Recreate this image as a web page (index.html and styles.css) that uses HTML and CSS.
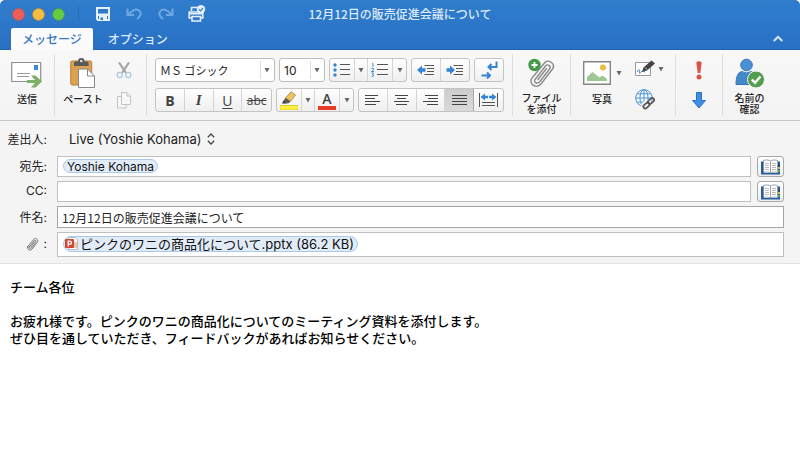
FILE: index.html
```html
<!DOCTYPE html>
<html lang="ja">
<head>
<meta charset="utf-8">
<meta name="viewport" content="width=device-width, initial-scale=1">
<title>12月12日の販売促進会議について</title>
<link rel="stylesheet" href="styles.css">
</head>
<body>
<svg class="defs" aria-hidden="true">
  <symbol id="caret" viewBox="0 0 6 6"><path d="M.5 1h5L3 5.500z" fill="#666"/></symbol>
  <symbol id="clip" viewBox="0 0 28 30"><g fill="none" stroke-linecap="round"><path d="M4 20 16.500 5c3.500-4.500 11.500.5 8 6L13 26c-5 5.500-13-.5-9-6z"/><path d="M7 21.500 17.500 8c2-2.500 6 0 4 3L12 23.500c-2.500 3-7 1-5-2z"/><path d="m10 21.500 8.500-11"/></g></symbol>
  <symbol id="book" viewBox="0 0 20 16"><path d="M0 2.500h3V14h14V2.500h2v13H0z" fill="#245c9e"/><path d="M17 5h2v3h-2z" fill="#274b70"/><path d="M17 8h2v2h-2z" fill="#e0b83c"/><path d="M17 11h2v2h-2z" fill="#5fa65b"/><path d="M2.500 1.500c3-1 5.500-.5 7 .5 1.500-1 4-1.500 7-.5v12c-3-.8-5.500-.5-7 .5-1.500-1-4-1.300-7-.5z" fill="#fff" stroke="#7d8b98" stroke-width=".8"/><path d="M9.500 2v12" stroke="#9ba4ad"/><path d="M4 4.500h4M4 6.500h4M4 8.500h4M4 10.500h4M11 4.500h4M11 6.500h4M11 8.500h4M11 10.500h4" stroke="#aaa" stroke-width=".8"/></symbol>
</svg>

<div class="window">
  <header class="chrome">
    <div class="titlebar">
      <div class="quick">
        <div class="lights">
          <button class="light close" aria-label="閉じる"></button>
          <button class="light mini" aria-label="最小化"></button>
          <button class="light zoom" aria-label="拡大"></button>
        </div>
        <button class="tool save" aria-label="保存"><svg width="14" height="14" viewBox="0 0 14 14"><path d="M1 1h12v12H2L1 12z" fill="none" stroke="#e5f0fb" stroke-width="2"/><path d="M1 6.500h12V9H1zM3 9h8v4.500H3z" fill="#e5f0fb"/><path d="M4.500 10.500H7v2.500H4.500z" fill="#2f79c9"/></svg></button>
        <button class="tool undo" aria-label="元に戻す"><svg width="16" height="12" viewBox="0 0 16 12" fill="none" stroke="#6ea8e0" stroke-width="2"><path d="M1.500.5v6.500H8M2 6.500 6.500 3C9 1 12 1 13.500 3s1.300 4.500-.5 6L11 11"/></svg></button>
        <button class="tool redo" aria-label="やり直し"><svg width="16" height="12" viewBox="0 0 16 12" fill="none" stroke="#6ea8e0" stroke-width="2"><path d="M14.500.5v6.500H8M14 6.500 9.500 3C7 1 4 1 2.500 3S1.200 7.500 3 9l2 2"/></svg></button>
        <button class="tool print" aria-label="印刷"><svg width="18" height="18" viewBox="0 0 18 18"><path d="M3.500 6V2.500h6M3.500 13H1.200V7h13.600v6h-2.300M4 11.500h8.500V16H4z" fill="none" stroke="#e5f0fb" stroke-width="1.600"/><path d="M1 8h14v1.500H1z" fill="#e5f0fb"/><circle cx="13" cy="4.200" r="4.200" fill="#e5f0fb"/><path d="m11 4.200 1.500 1.600 2.700-3" fill="none" stroke="#2f79c9" stroke-width="1.200"/></svg></button>
      </div>
      <h1>12月12日の販売促進会議について</h1>
    </div>
    <nav class="tabs">
      <button class="tab active">メッセージ</button>
      <button class="tab">オプション</button>
      <button class="collapse" aria-label="リボンを折りたたむ"><svg width="10" height="7" viewBox="0 0 10 7" fill="none" stroke="#d9e8f8" stroke-width="2"><path d="M.8 6 5 1.800 9.200 6"/></svg></button>
    </nav>
  </header>

  <div class="ribbon">
    <div class="group send">
      <button class="big"><svg width="32" height="30" viewBox="0 0 32 30"><path d="M.7 4.500h29v19h-29z" fill="#fff" stroke="#8e8e8e" stroke-width="1.200"/><path d="M23 7h4v5h-4z" fill="#3d8ad4"/><path d="M6 15.500h13M6 18.500h12" stroke="#999"/><path d="M16 22h8l-4-4.500h4.500l6.500 6-6.500 6H20l4-4.500h-8z" fill="#7fae68"/></svg><span>送信</span></button>
    </div>
    <div class="group paste">
      <button class="big"><svg width="26" height="30" viewBox="0 0 26 30"><rect x=".7" y="3" width="21" height="24" rx="1.500" fill="#dda251" stroke="#b9803a"/><path d="M4 8V5q0-1.500 2-1.500h2C8 1 9 0 11.300 0s3.300 1 3.300 3.500h2q2 0 2 1.500v3z" fill="#5a5a5a"/><circle cx="11.300" cy="3" r="1.300" fill="#ddd"/><path d="M8.500 11h9l7 7v11.500h-16z" fill="#fff" stroke="#888"/><path d="M17.500 11v7h7" fill="none" stroke="#888"/></svg><span>ペースト</span></button>
      <div class="stack">
        <button aria-label="切り取り"><svg width="16" height="17" viewBox="0 0 16 17" fill="none"><path d="M3 .5 10 11M13 .5 6 11" stroke="#a5a5a5" stroke-width="2.200"/><circle cx="3.700" cy="13" r="2.600" stroke="#a9cae4" stroke-width="1.300"/><circle cx="12.300" cy="13" r="2.600" stroke="#a9cae4" stroke-width="1.300"/></svg></button>
        <button aria-label="コピー"><svg width="14" height="17" viewBox="0 0 14 17" fill="#f7f7f7" stroke="#c4c4c4"><path d="M.5 4.500h6l2.500 2.500v9H.5z"/><path d="M4.500.5h5.500l3.500 3.500v8.500h-9z"/><path d="M10 .5V4h3.500"/></svg></button>
      </div>
    </div>
    <div class="group format">
      <div class="row">
        <div class="pick font"><select aria-label="フォント"><option>ＭＳ ゴシック</option></select><svg class="caret" width="6" height="6"><use href="#caret"/></svg></div>
        <div class="pick size"><select aria-label="フォント サイズ"><option>10</option></select><svg class="caret" width="6" height="6"><use href="#caret"/></svg></div>
        <div class="bar split">
          <button aria-label="箇条書き"><svg width="18" height="14" viewBox="0 0 18 14"><g fill="#3583d3"><circle cx="2" cy="2" r="1.700"/><circle cx="2" cy="7" r="1.700"/><circle cx="2" cy="12" r="1.700"/></g><path d="M7 1.500h10M7 6.500h10M7 11.500h10" stroke="#555"/></svg></button>
          <button class="drop" aria-label="箇条書きの種類"><svg width="6" height="6"><use href="#caret"/></svg></button>
          <button aria-label="段落番号"><svg width="18" height="14" viewBox="0 0 18 14"><path d="M1 1l1-.5V4M.5 5.500h2v1.300l-2 1.700h2.500M.5 10h2L1.500 11.500q1.500 0 1 1.500l-2 .5" fill="none" stroke="#3583d3" stroke-width=".9"/><path d="M6 1.500h11M6 6.500h11M6 11.500h11" stroke="#555"/></svg></button>
          <button class="drop" aria-label="段落番号の種類"><svg width="6" height="6"><use href="#caret"/></svg></button>
        </div>
        <div class="bar two">
          <button aria-label="インデントを減らす"><svg width="18" height="12" viewBox="0 0 18 12"><path d="M0 6 5 1.500v2.700h3.500v3.600H5v2.700z" fill="#3583d3"/><path d="M7.500 1.500H17M10 4.500h7M10 7.500h7M7.500 10.500H17" stroke="#555"/></svg></button>
          <button aria-label="インデントを増やす"><svg width="18" height="12" viewBox="0 0 18 12"><path d="M9 6 4 1.500v2.700H.5v3.600H4v2.700z" fill="#3583d3"/><path d="M7.500 1.500H17M10 4.500h7M10 7.500h7M7.500 10.500H17" stroke="#555"/></svg></button>
        </div>
        <div class="bar one">
          <button aria-label="文字の方向"><svg width="17" height="18" viewBox="0 0 17 18" fill="none" stroke="#3583d3" stroke-width="2"><path d="M15.500.5v5.500H8M10.500 3 7.500 6l3 3M.5 14.500h8M6 11.500l3 3-3 3"/></svg></button>
        </div>
      </div>
      <div class="row">
        <div class="bar four">
          <button class="b">B</button><button class="i">I</button><button class="u">U</button><button class="s">abc</button>
        </div>
        <div class="bar split">
          <button aria-label="蛍光ペン"><svg width="18" height="19" viewBox="0 0 18 19"><path d="M0 14.500h18V19H0z" fill="#fff13c" stroke="#d9cf33"/><path d="M5.500 7 11 .8 15.500 4l-5 6.500z" fill="#efc261" stroke="#a8843d" stroke-width=".8"/><path d="m5.500 7 5 3.500-2.500 2-4.500-2.800z" fill="#555"/><path d="m3.500 9.500 4 3H2z" fill="#333"/></svg></button>
          <button class="drop" aria-label="蛍光ペンの色"><svg width="6" height="6"><use href="#caret"/></svg></button>
          <button class="color" aria-label="フォントの色"><span>A</span></button>
          <button class="drop" aria-label="フォントの色の選択"><svg width="6" height="6"><use href="#caret"/></svg></button>
        </div>
        <div class="bar five">
          <button aria-label="左揃え"><svg width="15" height="11" viewBox="0 0 15 11" stroke="#444"><path d="M0 .5h13M0 3.500h10M0 6.500h15M0 9.500h11"/></svg></button>
          <button aria-label="中央揃え"><svg width="15" height="11" viewBox="0 0 15 11" stroke="#444"><path d="M1 .5h13M3 3.500h9M0 6.500h15M2 9.500h11"/></svg></button>
          <button aria-label="右揃え"><svg width="15" height="11" viewBox="0 0 15 11" stroke="#444"><path d="M2 .5h13M5 3.500h10M0 6.500h15M4 9.500h11"/></svg></button>
          <button class="on" aria-label="両端揃え"><svg width="15" height="11" viewBox="0 0 15 11" stroke="#444"><path d="M0 .5h15M0 3.500h15M0 6.500h15M0 9.500h15"/></svg></button>
          <button aria-label="段落の幅"><svg width="19" height="14" viewBox="0 0 19 14"><path d="M.5 0v14M18.500 0v14M3 9.500h13M3 12.500h13" stroke="#555"/><path d="m1.500 4 4.500-3.500v2.300h7V.5L17.500 4 13 7.500V5.200H6v2.300z" fill="#3583d3"/><path d="M9 2h1v4H9z" fill="#f5f5f5"/></svg></button>
        </div>
      </div>
    </div>
    <div class="group attach">
      <button class="big"><svg width="28" height="30" viewBox="0 0 28 30"><use href="#clip" stroke="#8b8b8b" stroke-width="1.400"/><circle cx="6.500" cy="7" r="6.200" fill="#459a49"/><path d="M6.500 4v6M3.500 7h6" stroke="#fff" stroke-width="1.800"/></svg><span>ファイル<br>を添付</span></button>
    </div>
    <div class="group insert">
      <button class="big"><i class="pair"><svg width="28" height="30" viewBox="0 0 28 30"><path d="M.7 3.700h26.600v22.600H.7z" fill="#fff" stroke="#858585" stroke-width="1.400"/><path d="M4 23v-4l5.500-5 7 5.500 3-2 4.500 3.500v2z" fill="#9cc795"/><circle cx="20" cy="9.500" r="3" fill="#efb83f"/></svg><svg width="6" height="6"><use href="#caret"/></svg></i><span>写真</span></button>
      <div class="stack">
        <button class="sign" aria-label="署名"><svg width="20" height="17" viewBox="0 0 20 17"><path d="M.5 2.500h15v13H.5z" fill="#fff" stroke="#999"/><path d="M2 12c2-3 3-3 2.500 0s1.500 0 2.500-1 1 1 3 1" fill="none" stroke="#3d87cf"/><path d="M7 12 8.500 7.500 16.500.5 20 3.500l-8 7z" fill="#444"/><path d="m10 7.500 2 2" stroke="#ccc"/></svg><svg width="6" height="6"><use href="#caret"/></svg></button>
        <button aria-label="リンク"><svg width="21" height="21" viewBox="0 0 21 21" fill="none"><g stroke="#4b92d5"><circle cx="9" cy="9" r="8.300" fill="#fafcff"/><ellipse cx="9" cy="9" rx="4" ry="8.300"/><path d="M9 .7v16.600M.7 9h16.600M2 4.800h14M2 13.200h14"/></g><g stroke="#f5f5f5" stroke-width="4.500"><rect x="8" y="14" width="7" height="4" rx="2" transform="rotate(-42 11.500 16)"/></g><g stroke="#555" stroke-width="1.700"><rect x="8" y="14.500" width="7" height="4" rx="2" transform="rotate(-42 11.500 16.500)"/><rect x="12.500" y="10" width="7" height="4" rx="2" transform="rotate(-42 16 12)"/></g></svg></button>
      </div>
    </div>
    <div class="group prio">
      <button aria-label="重要度 - 高"><svg width="6" height="19" viewBox="0 0 6 19" fill="#dd5245"><path d="M.3 1.500q2.700-2.500 5.400 0L4.300 12H1.700z"/><circle cx="3" cy="16" r="2.500"/></svg></button>
      <button aria-label="重要度 - 低"><svg width="14" height="17" viewBox="0 0 14 17"><path d="M4.500.5h5v8h4L7 16 .5 8.500h4z" fill="#3d8ee6" stroke="#2c72c2"/></svg></button>
    </div>
    <div class="group names">
      <button class="big"><svg width="30" height="30" viewBox="0 0 30 30"><circle cx="11.500" cy="7" r="5.800" fill="#4b90d2" stroke="#3577b8"/><path d="M1 26.500c0-8 2-12 5.500-13q5 3 10 0c3 1 5 5 5 13z" fill="#4388cb" stroke="#3577b8"/><circle cx="21" cy="21.500" r="8.500" fill="#559e51" stroke="#f5f5f5"/><path d="m16.800 21.500 3.200 3.200 5.500-6.200" fill="none" stroke="#fff" stroke-width="2.400"/></svg><span>名前の<br>確認</span></button>
    </div>
  </div>

  <form class="fields">
    <label for="from">差出人:</label>
    <div class="from"><select id="from"><option>Live (Yoshie Kohama)</option></select><svg width="8" height="12" viewBox="0 0 8 12" fill="none" stroke="#444" stroke-width="1.300"><path d="M.8 4.200 4 1l3.200 3.200M.8 7.800 4 11l3.200-3.200"/></svg></div>

    <label for="to">宛先:</label>
    <div class="line"><div class="box"><span class="token">Yoshie Kohama</span><input id="to" type="text"></div><button type="button" class="address" aria-label="宛先のアドレス帳"><svg width="20" height="16"><use href="#book"/></svg></button></div>

    <label for="cc">CC:</label>
    <div class="line"><div class="box"><input id="cc" type="text"></div><button type="button" class="address" aria-label="CCのアドレス帳"><svg width="20" height="16"><use href="#book"/></svg></button></div>

    <label for="subject">件名:</label>
    <div class="box subject"><input id="subject" type="text" value="12月12日の販売促進会議について"></div>

    <span class="label"><svg width="13" height="14"><use href="#clip" stroke="#666" stroke-width="1.800"/></svg><span>:</span></span>
    <div class="box files"><span class="token file"><svg width="13" height="13" viewBox="0 0 13 13"><path d="M3.500.5H10l2.500 2.500v9.500h-9z" fill="#fff" stroke="#bbb"/><path d="M8 5h4v6H8z" fill="#e9c9ae"/><rect y="2" width="9" height="9" rx="1" fill="#cf4634"/><path d="M3.200 9.500V4.200h1.500q1.800 0 1.800 1.500T4.700 7.200H3.200" fill="none" stroke="#fff" stroke-width="1.300"/></svg><span>ピンクのワニの商品化について.pptx (86.2 KB)</span></span></div>
  </form>

  <textarea class="message" aria-label="本文">チーム各位

お疲れ様です。ピンクのワニの商品化についてのミーティング資料を添付します。
ぜひ目を通していただき、フィードバックがあればお知らせください。</textarea>
</div>
</body>
</html>
```
FILE: styles.css
```css
* { box-sizing: border-box; }

html, body { height: 100%; margin: 0; }

body, button, input, select, textarea {
  font-family: Inter, "Noto Sans CJK JP", sans-serif;
  font-size: 12px;
  color: #222;
}

body { background: #fff; }
svg { display: block; flex: none; }
.defs { position: absolute; width: 0; height: 0; }

button {
  display: flex;
  align-items: center;
  justify-content: center;
  padding: 0;
  border: 0;
  background: none;
}

.window { display: flex; flex-direction: column; min-height: 100vh; }

/* Title bar and tabs */
.chrome {
  background: linear-gradient(#2f7dcc, #2970c5);
  border-bottom: 1px solid #2263af;
  border-radius: 5px 5px 0 0;
}

.titlebar {
  display: grid;
  grid-template-columns: 1fr auto 1fr;
  align-items: center;
  height: 28px;
}

.titlebar h1 {
  margin: 0;
  font: 500 12px/18px "Noto Sans CJK JP", sans-serif;
  color: #dbe9f8;
}

.quick { display: flex; align-items: center; padding-left: 12px; }
.lights { display: flex; gap: 7px; padding-right: 13px; border-right: 1px solid #286cb4; height: 16px; align-items: center; }
.light { width: 13px; height: 13px; border-radius: 50%; }
.close { background: #ed5e57; border: 1px solid #a45c70; }
.mini { background: #f6bd41; border: 1px solid #a68b54; }
.zoom { background: #65cb43; border: 1px solid #4a9361; }
.save { margin-left: 17px; }
.undo { margin-left: 16px; }
.redo { margin-left: 16px; }
.print { margin-left: 14px; }

.tabs { display: flex; height: 21px; padding-left: 11px; }
.tab { padding: 0 13px; font: 500 12px/18px "Noto Sans CJK JP", sans-serif; color: #dceafa; height: 22px; }
.tab.active { padding: 0 11px; background: #fbfbfb; color: #3577bd; border-radius: 2px 2px 0 0; margin-right: 2px; }
.collapse { margin: 0 17px 0 auto; }

/* Ribbon */
.ribbon {
  display: flex;
  min-height: 71px;
  padding: 4px 0;
  background: linear-gradient(#f8f8f8, #f3f3f3);
  border-bottom: 1px solid #c8c8c8;
}

.group { display: flex; justify-content: center; border-right: 1px solid #dedede; }
.group:last-child { border-right: 0; }

.big { flex-direction: column; justify-content: flex-start; padding-top: 4px; }
.big span { font: 500 10px/11px "Noto Sans CJK JP", sans-serif; margin-top: 4px; }
.send .big span, .paste .big span, .insert .big span { margin-top: 5px; }

.send { width: 55px; }
.paste { width: 92px; gap: 13px; padding-right: 6px; }
.attach { width: 58px; }
.insert { width: 105px; }
.pair { display: flex; align-items: center; gap: 5px; }
.prio { width: 47px; flex-direction: column; align-items: center; gap: 12px; }
.names { width: 53px; }

.stack { display: flex; flex-direction: column; gap: 13px; padding-top: 8px; align-items: center; }
.insert .stack { align-items: flex-start; gap: 12px; padding-top: 6px; margin-left: 13px; }
.sign { gap: 3px; }

.format { width: 366px; flex-direction: column; align-items: flex-start; gap: 6px; padding-left: 8px; }
.row { display: flex; gap: 4px; }

.pick { position: relative; display: flex; height: 24px; border: 1px solid #bdbdbd; border-radius: 3px; background: #fff; }
.pick select { appearance: none; width: 100%; border: 0; background: none; padding: 0 0 0 4px; }
.pick .caret { position: absolute; right: 4px; top: 8px; }
.pick::after { content: ""; position: absolute; right: 13px; top: 2px; bottom: 2px; border-right: 1px solid #ddd; }
.font { width: 120px; }
.font select { font: 11px "Noto Sans CJK JP", sans-serif; }
.size { width: 46px; }

.bar { display: grid; height: 24px; border: 1px solid #c4c4c4; border-radius: 3px; background: linear-gradient(#fff, #efefef); }
.bar button { border-right: 1px solid #d5d5d5; }
.bar button:last-child { border-right: 0; }
.split { grid-template-columns: 25px 13px 25px 13px; width: 78px; }
.two { grid-template-columns: 1fr 1fr; width: 59px; }
.one { width: 30px; }
.four { grid-template-columns: repeat(4, 1fr); width: 117px; }
.five { grid-template-columns: repeat(5, 1fr); width: 146px; }
.bar .on { background: linear-gradient(#ccc, #dadada); border-color: #aaa; }

.four button { color: #444; }
.four .b { font: bold 14px "Open Sans", sans-serif; }
.four .i { font: italic bold 15px "Liberation Serif", serif; }
.four .u { font: 14px "Open Sans", sans-serif; text-decoration: underline; text-underline-offset: 2px; }
.four .s { font: 12px "Open Sans", sans-serif; text-decoration: line-through; }
.color span { width: 18px; border-bottom: 4px solid #e63c28; font: 600 14px/15px "Open Sans", sans-serif; color: #444; }

/* Address fields */
.fields {
  display: grid;
  grid-template-columns: 40px 1fr;
  grid-template-rows: 26px 21px 21px 22px 25px;
  gap: 4px 10px;
  padding: 5px 16px 6px 7px;
  background: #f4f4f4;
  border-bottom: 1px solid #e2e2e2;
}

.fields label, .label { display: flex; align-items: center; justify-content: flex-end; gap: 5px; padding-bottom: 2px; white-space: nowrap; }
.from { display: flex; align-items: center; padding-left: 12px; gap: 5px; }
.from select { appearance: none; border: 0; background: none; padding: 0; font-size: 13px; }
.line { display: flex; gap: 6px; }
.box { flex: 1; display: flex; align-items: center; min-width: 0; padding: 0 4px; border: 1px solid #bfbfbf; background: #fff; }
.line .box { padding-bottom: 1px; }
.box input { flex: 1; min-width: 0; padding: 0; border: 0; outline: 0; background: none; }
.subject { border-color: #a6a6a6; }
.box.subject input { font-family: "Noto Sans CJK JP", sans-serif; }
.token { display: flex; align-items: center; height: 14px; margin-left: 1px; padding: 0 3px; border: 1px solid #a9c8ec; border-radius: 8px; background: #e2ecf9; color: #111; white-space: nowrap; }
.files { padding-bottom: 2px; }
.file { height: 16px; padding: 0 3px 0 1px; gap: 2px; font-size: 13px; }
.address { width: 27px; border: 1px solid #aaa; border-radius: 3px; background: linear-gradient(#fff, #eee); }

/* Message body */
.message {
  flex: 1;
  padding: 14px 10px;
  border: 0;
  outline: 0;
  resize: none;
  background: #fff;
  font: 500 13px/17px "Noto Sans CJK JP", sans-serif;
  color: #000;
}
```
